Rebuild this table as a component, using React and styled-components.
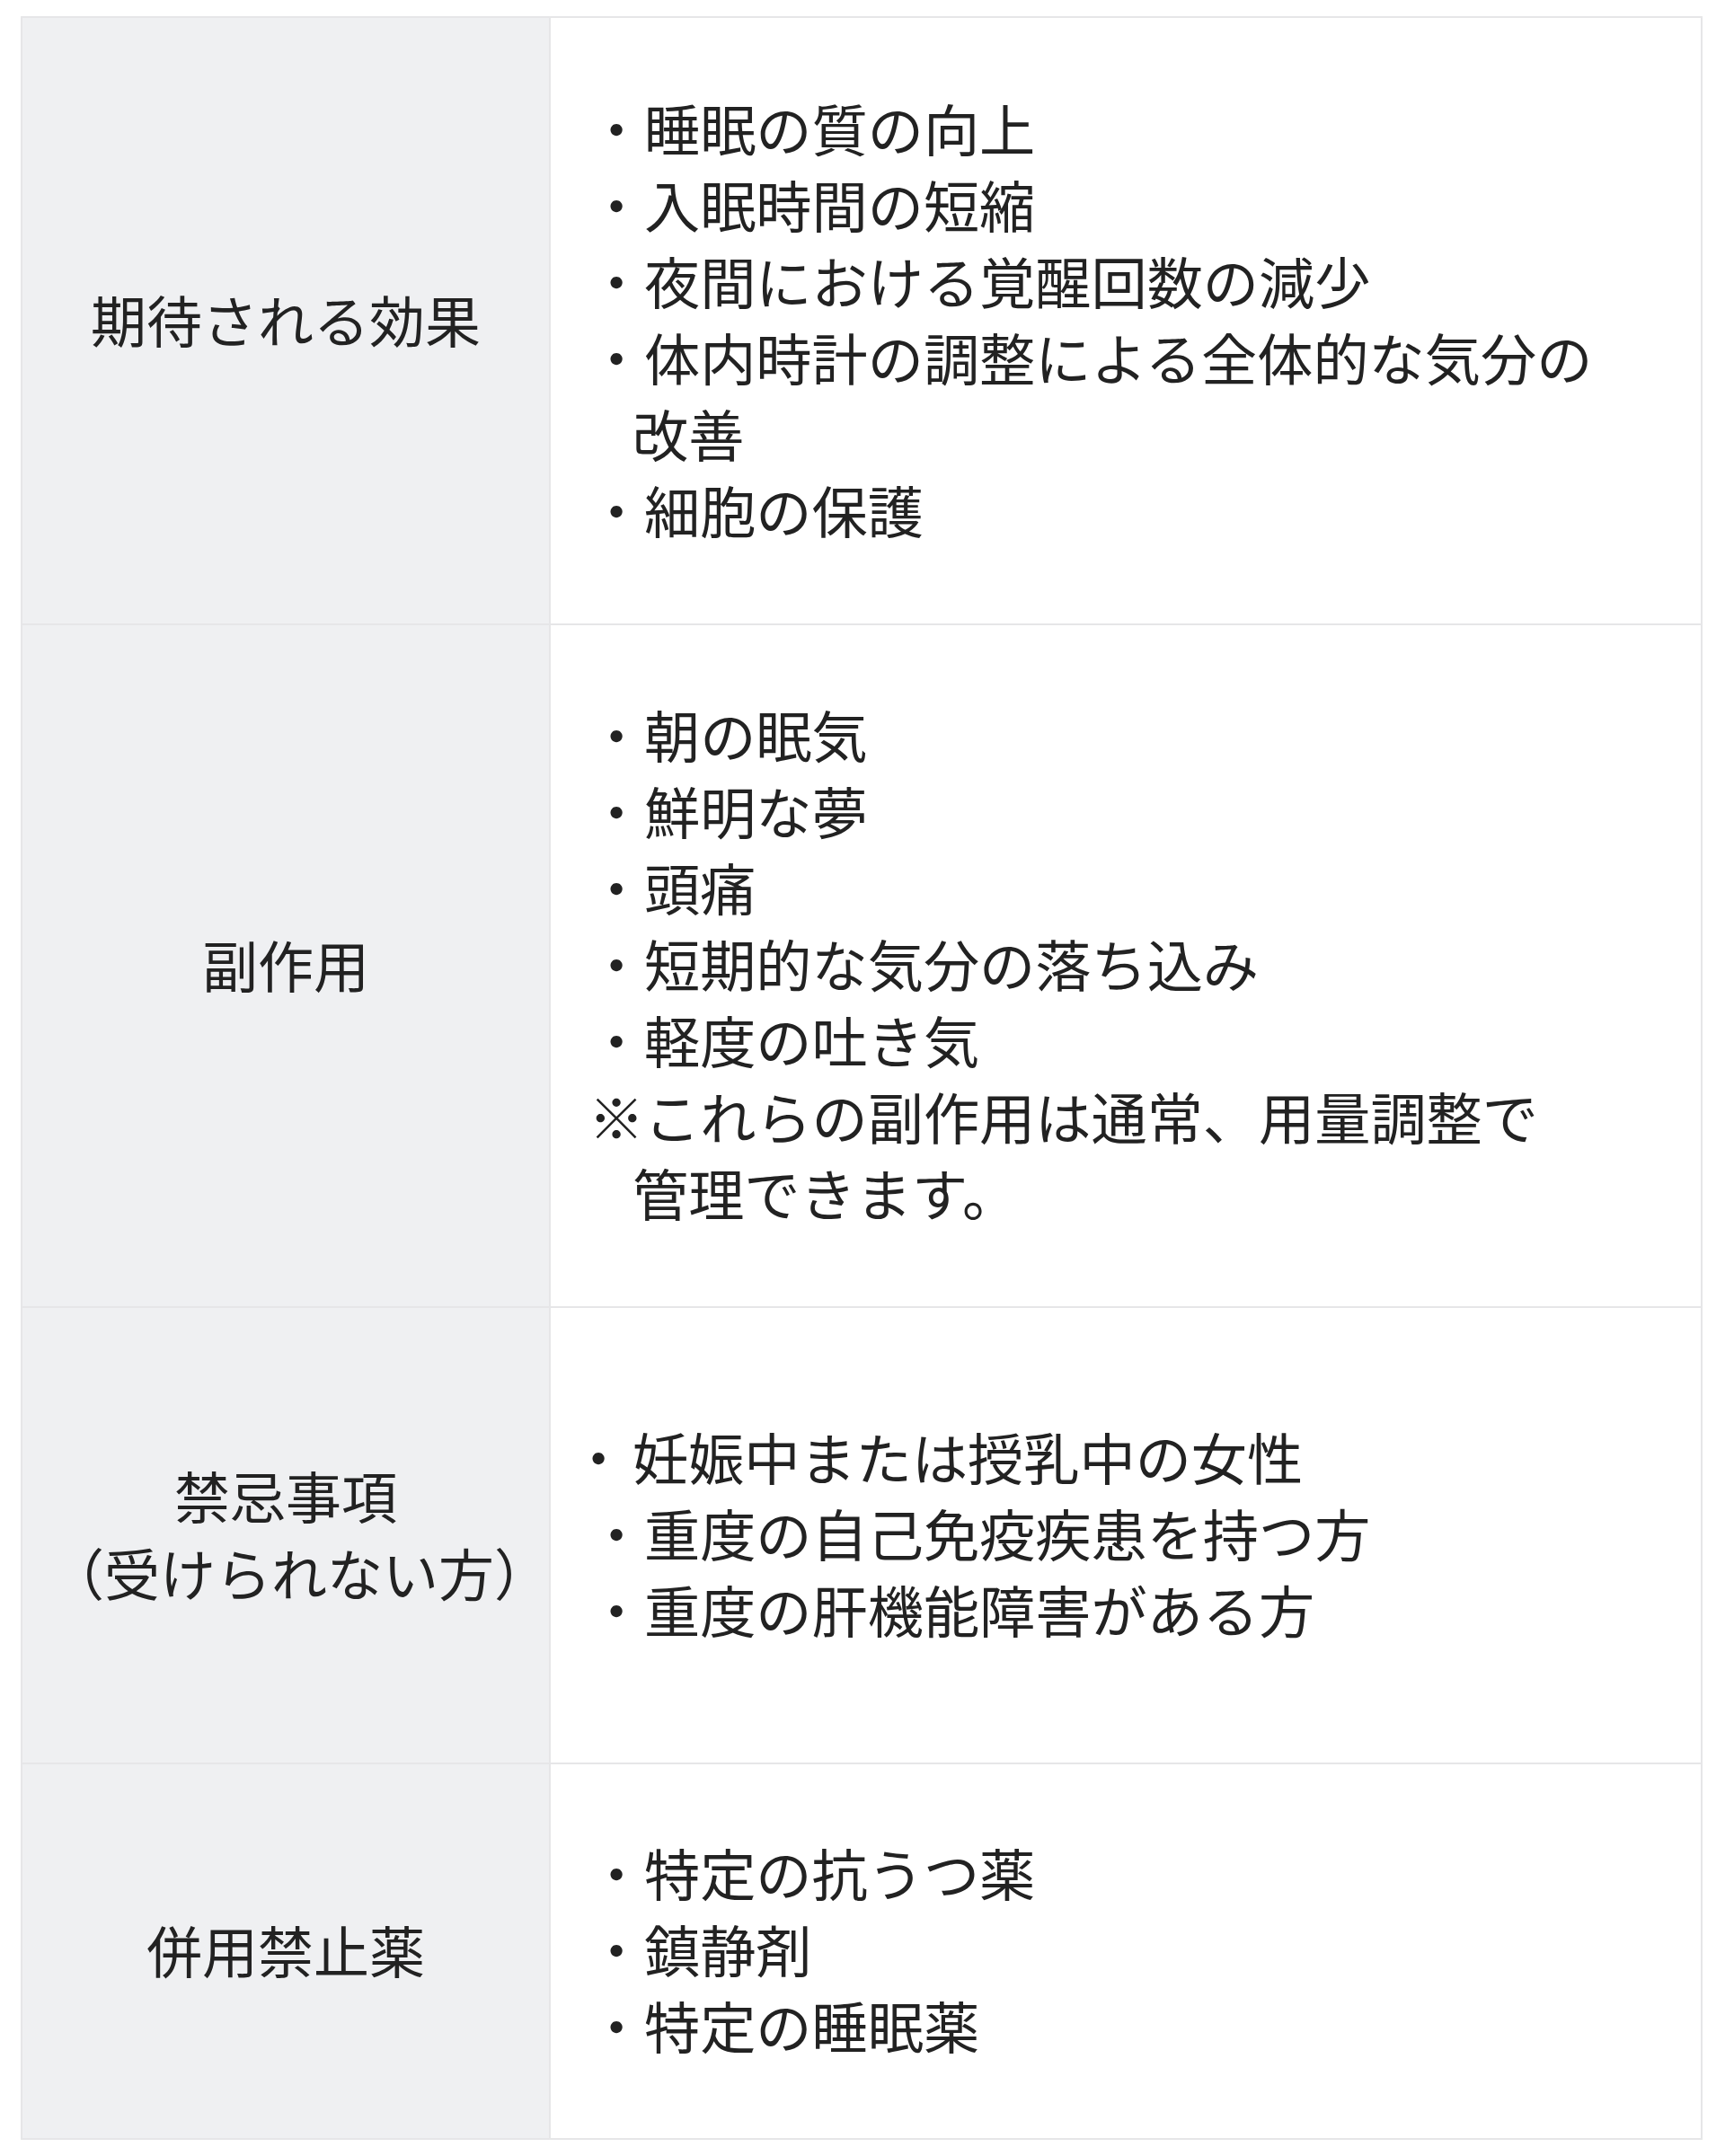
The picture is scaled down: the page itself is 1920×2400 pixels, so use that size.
import React from "react";
import styled, { createGlobalStyle } from "styled-components";

const GlobalStyle = createGlobalStyle`
  html, body { margin: 0; padding: 0; background: #ffffff; }
  body {
    font-family: "Noto Sans CJK JP", "Noto Sans", sans-serif;
    color: #222222;
  }
`;

const Page = styled.div`
  padding: 18px 25px 18px 23px;
`;

const Table = styled.div`
  display: flex;
  flex-direction: column;
  border: 2px solid #e6e6e8;
`;

const Row = styled.div`
  display: grid;
  grid-template-columns: 588px 1fr;
  height: ${(p) => p.$h}px;
  border-top: ${(p) => (p.$first ? "none" : "2px solid #e6e6e8")};
`;

const Label = styled.div`
  display: flex;
  flex-direction: column;
  align-items: center;
  justify-content: center;
  background: #eff0f2;
  border-right: 2px solid #e6e6e8;
  font-size: 62px;
  line-height: 86px;
  text-align: center;
  padding: 0 29px 5px;
  white-space: nowrap;
`;

const LabelLine = styled.div`
  align-self: ${(p) => (p.$overflow ? "flex-start" : "center")};
`;

const Body = styled.div`
  display: flex;
  flex-direction: column;
  justify-content: center;
  padding: 0 40px 5px 42px;
  font-size: 62.2px;
  line-height: 85px;
  white-space: nowrap;
`;

const Item = styled.div`
  padding-left: 49px;
  text-indent: -49px;
`;

const Marker = styled.span`
  display: inline-block;
  width: 62px;
  text-indent: 0;
  text-align: center;
  margin: ${(p) => (p.$tight ? "0 7px 0 -20px" : "0")};
`;

const rows = [
  {
    h: 674,
    label: ["期待される効果"],
    items: [
      { m: "・", t: ["睡眠の質の向上"] },
      { m: "・", t: ["入眠時間の短縮"] },
      { m: "・", t: ["夜間における覚醒回数の減少"] },
      { m: "・", t: ["体内時計の調整による全体的な気分の", "改善"] },
      { m: "・", t: ["細胞の保護"] },
    ],
  },
  {
    h: 758,
    label: ["副作用"],
    items: [
      { m: "・", t: ["朝の眠気"] },
      { m: "・", t: ["鮮明な夢"] },
      { m: "・", t: ["頭痛"] },
      { m: "・", t: ["短期的な気分の落ち込み"] },
      { m: "・", t: ["軽度の吐き気"] },
      { m: "※", t: ["これらの副作用は通常、用量調整で", "管理できます。"] },
    ],
  },
  {
    h: 506,
    label: ["禁忌事項", "（受けられない方）"],
    items: [
      { m: "・", t: ["妊娠中または授乳中の女性"], tight: true },
      { m: "・", t: ["重度の自己免疫疾患を持つ方"] },
      { m: "・", t: ["重度の肝機能障害がある方"] },
    ],
  },
  {
    h: 416,
    label: ["併用禁止薬"],
    items: [
      { m: "・", t: ["特定の抗うつ薬"] },
      { m: "・", t: ["鎮静剤"] },
      { m: "・", t: ["特定の睡眠薬"] },
    ],
  },
];

export default function App() {
  return (
    <>
      <GlobalStyle />
      <Page>
        <Table>
          {rows.map((r, i) => (
            <Row key={i} $h={r.h} $first={i === 0}>
              <Label>
                {r.label.map((l, j) => (
                  <LabelLine key={j} $overflow={l.length > 8}>
                    {l}
                  </LabelLine>
                ))}
              </Label>
              <Body>
                {r.items.map((it, k) => (
                  <Item key={k}>
                    <Marker $tight={it.tight}>{it.m}</Marker>
                    {it.t.map((line, n) => (
                      <React.Fragment key={n}>
                        {n > 0 && <br />}
                        {line}
                      </React.Fragment>
                    ))}
                  </Item>
                ))}
              </Body>
            </Row>
          ))}
        </Table>
      </Page>
    </>
  );
}
